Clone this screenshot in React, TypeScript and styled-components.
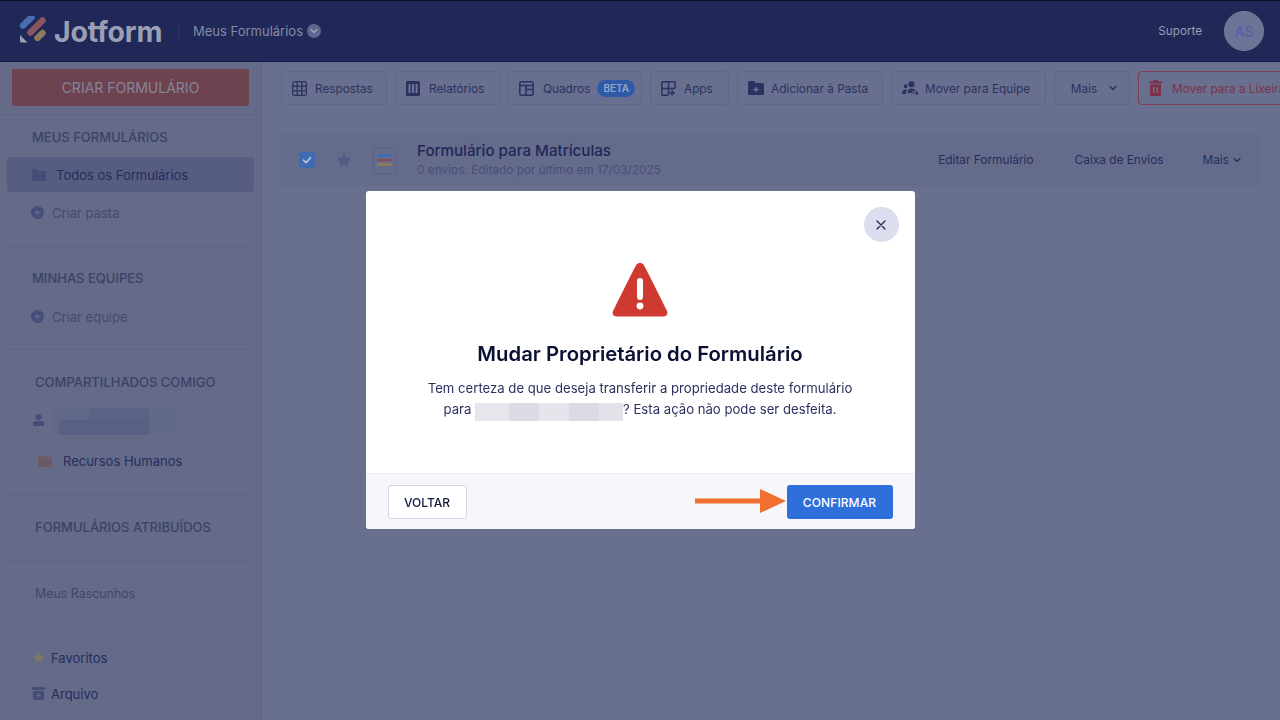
import React from "react";
import styled, { createGlobalStyle } from "styled-components";

const Global = createGlobalStyle`
  html, body { margin: 0; padding: 0; height: 100%; overflow: hidden; }
  body { font-family: Inter, "Liberation Sans", sans-serif; background: #6a7090; }
  * { box-sizing: border-box; }
`;

const Page = styled.div`
  width: 1280px;
  height: 720px;
  display: flex;
  flex-direction: column;
  overflow: hidden;
  background: #696f8f;
`;

const Header = styled.header`
  height: 62px;
  flex: none;
  display: flex;
  align-items: center;
  background: #1f2857;
  border-top: 1px solid #0b0e24;
  border-bottom: 1px solid #171e4a;
  padding: 0 16px 0 19px;
`;
const Brand = styled.div`
  display: flex;
  align-items: center;
  gap: 5px;
  width: 146px;
  flex: none;
`;
const BrandName = styled.span`
  font-size: 28.5px;
  font-weight: 700;
  letter-spacing: -0.2px;
  color: #9a9fb5;
`;
const PageName = styled.div`
  margin-left: 13px;
  padding-left: 14px;
  border-left: 1px solid #2a3363;
  height: 20px;
  display: flex;
  align-items: center;
  gap: 4px;
  font-size: 13px;
  color: #858ba8;
`;
const RoundChevron = styled.span`
  width: 14px;
  height: 14px;
  border-radius: 50%;
  background: #5e6690;
  display: flex;
  align-items: center;
  justify-content: center;
`;
const Support = styled.span`
  margin-left: auto;
  font-size: 11.7px;
  color: #989db3;
`;
const Avatar = styled.div`
  width: 40px;
  height: 40px;
  margin-left: 22px;
  border-radius: 50%;
  background: #6d7394;
  border: 1px solid #767c9c;
  color: #5d5fa8;
  font-size: 14px;
  font-weight: 600;
  display: flex;
  align-items: center;
  justify-content: center;
`;

const Body = styled.div`
  flex: 1;
  display: flex;
  min-height: 0;
`;
const Sidebar = styled.aside`
  width: 262px;
  flex: none;
  background: #646a88;
  border-right: 1px solid #5d6485;
`;
const CreateSlot = styled.div`
  height: 53px;
  padding: 7px 12px 0;
  border-bottom: 1px solid #5d6485;
`;
const CreateButton = styled.div`
  width: 237px;
  height: 37px;
  border-radius: 2px;
  background: #6d4350;
  color: #86849b;
  font-size: 14px;
  font-weight: 400;
  display: flex;
  align-items: center;
  justify-content: center;
`;
const Section = styled.section<{ $top: number; $bottom: number; $last?: boolean }>`
  margin: 0 7px;
  padding-top: ${(p) => p.$top}px;
  padding-bottom: ${(p) => p.$bottom}px;
  border-bottom: ${(p) => (p.$last ? "none" : "1px solid #5d6485")};
`;
const SectionTitle = styled.div<{ $left: number; $gap?: number }>`
  height: 20px;
  line-height: 20px;
  padding-left: ${(p) => p.$left}px;
  margin-bottom: ${(p) => p.$gap ?? 0}px;
  font-size: 13px;
  font-weight: 500;
  color: #3c4266;
`;
const NavRow = styled.div<{ $left: number; $gap: number; $active?: boolean; $muted?: boolean }>`
  height: 35px;
  display: flex;
  align-items: center;
  gap: ${(p) => p.$gap}px;
  padding-left: ${(p) => p.$left}px;
  border-radius: 4px;
  font-size: 13px;
  background: ${(p) => (p.$active ? "#565d81" : "transparent")};
  color: ${(p) => (p.$muted ? "#454b70" : "#262d5c")};
`;
const CreateRow = styled(NavRow)`
  margin-top: 3px;
`;
const SpacedRow = styled(NavRow)`
  margin-top: 1px;
`;
const MutedLine = styled.div`
  height: 20px;
  line-height: 20px;
  padding-left: 28px;
  font-size: 12.4px;
  color: #41476b;
`;
const UserRow = styled.div`
  display: flex;
  align-items: flex-start;
  gap: 7px;
  height: 28px;
  margin: 16px 0 7px;
  padding-left: 26px;
`;
const PersonSlot = styled.span`
  display: flex;
  margin-top: 6px;
`;
const SideMosaic = styled.div`
  width: 126px;
  height: 27px;
  background:
    linear-gradient(#5a6083, #5a6083) 8px 12px / 90px 15px no-repeat,
    linear-gradient(#5c6284, #5c6284) 38px 0 / 60px 12px no-repeat,
    #626887;
`;

const Main = styled.main`
  flex: 1;
  min-width: 0;
  overflow: hidden;
`;
const Toolbar = styled.div`
  height: 53px;
  display: flex;
  align-items: flex-start;
  gap: 8px;
  padding: 9px 0 0 19px;
  background: #696f8f;
  border-bottom: 1px solid #626a8e;
  overflow: hidden;
`;
const ToolButton = styled.div<{ $width: number; $gap?: number; $danger?: boolean }>`
  width: ${(p) => p.$width}px;
  flex: none;
  height: 34px;
  display: flex;
  align-items: center;
  gap: ${(p) => p.$gap ?? 9}px;
  padding-left: 10px;
  white-space: nowrap;
  border-radius: 4px;
  font-size: 11.8px;
  color: ${(p) => (p.$danger ? "#7d3149" : "#2b3260")};
  border: 1px solid ${(p) => (p.$danger ? "#7d3d55" : "#5f678d")};
`;
const ToolLabel = styled.span`
  padding-top: 1px;
`;
const MoreButton = styled(ToolButton)`
  justify-content: center;
  padding-left: 5px;
`;
const BetaTag = styled.span`
  margin-left: -2px;
  height: 17px;
  padding: 0 6px;
  border-radius: 9px;
  background: #2e5aa8;
  color: #9aa6c8;
  font-size: 10px;
  font-weight: 600;
  display: flex;
  align-items: center;
`;
const FormCard = styled.div`
  margin: 19px 19px 0;
  height: 52px;
  display: flex;
  align-items: center;
  padding: 0 19px 0 18px;
  border-radius: 4px;
  background: #656c8b;
`;
const CheckBox = styled.span`
  width: 16px;
  height: 16px;
  border-radius: 3px;
  background: #3f6bb4;
  display: flex;
  align-items: center;
  justify-content: center;
`;
const StarSlot = styled.span`
  margin-left: 21px;
  display: flex;
`;
const FormIcon = styled.div`
  margin-left: 21px;
  width: 23px;
  height: 27px;
  border-radius: 3px;
  border: 1px solid #5a6186;
  padding: 0 3px;
  display: flex;
  flex-direction: column;
  justify-content: center;
  gap: 2px;
`;
const FormStripe = styled.span<{ $color: string }>`
  height: 2.5px;
  background: ${(p) => p.$color};
`;
const FormText = styled.div`
  margin-left: 21px;
  flex: 1;
`;
const FormTitle = styled.div`
  font-size: 15.15px;
  font-weight: 500;
  line-height: 18px;
  margin-bottom: 1px;
  color: #1f2758;
`;
const FormMeta = styled.div`
  font-size: 11.85px;
  line-height: 18px;
  color: #484e78;
`;
const FormAction = styled.span<{ $space: number }>`
  margin-left: ${(p) => p.$space}px;
  margin-bottom: 1px;
  display: flex;
  align-items: center;
  gap: 3px;
  font-size: 11.85px;
  color: #262d5c;
`;

const Backdrop = styled.div`
  position: fixed;
  inset: 0;
  display: flex;
  align-items: center;
  justify-content: center;
`;
const Modal = styled.div`
  position: relative;
  width: 549px;
  height: 338px;
  background: #ffffff;
  border-radius: 3px;
  overflow: hidden;
  display: flex;
  flex-direction: column;
`;
const CloseButton = styled.div`
  position: absolute;
  top: 16px;
  right: 16px;
  width: 35px;
  height: 35px;
  border-radius: 50%;
  background: #dadeee;
  display: flex;
  align-items: center;
  justify-content: center;
`;
const ModalBody = styled.div`
  flex: 1;
  display: flex;
  flex-direction: column;
  align-items: center;
  padding-top: 71px;
`;
const ModalTitle = styled.h2`
  margin: 23px 0 0;
  font-size: 20.3px;
  line-height: 28px;
  font-weight: 600;
  color: #0a1033;
`;
const ModalText = styled.p`
  margin: 10px 0 0;
  font-size: 13.15px;
  line-height: 21px;
  text-align: center;
  color: #2b3260;
`;
const Redacted = styled.span`
  display: inline-block;
  vertical-align: -7px;
  width: 148px;
  height: 18px;
  background: linear-gradient(
    90deg,
    #e6e7ec 0 34px,
    #dcdde4 34px 64px,
    #e5e6eb 64px 94px,
    #d9dae3 94px 124px,
    #e2e3e9 124px
  );
`;
const ModalFooter = styled.div`
  height: 56px;
  flex: none;
  display: flex;
  align-items: flex-start;
  justify-content: space-between;
  padding: 11px 22px 0;
  background: #f7f7fb;
  border-top: 1px solid #eeeef3;
`;
const Back = styled.div`
  width: 79px;
  height: 34px;
  border: 1px solid #d3d6ec;
  border-radius: 3px;
  background: #fff;
  color: #0f1640;
  font-size: 12px;
  font-weight: 500;
  display: flex;
  align-items: center;
  justify-content: center;
`;
const ConfirmGroup = styled.div`
  display: flex;
  align-items: flex-start;
  gap: 1px;
`;
const ArrowSlot = styled.span`
  display: flex;
  margin-top: 3px;
`;
const Confirm = styled.div`
  width: 106px;
  height: 34px;
  border-radius: 3px;
  background: #2f6fdc;
  color: #fff;
  font-size: 12px;
  font-weight: 500;
  letter-spacing: 0.1px;
  display: flex;
  align-items: center;
  justify-content: center;
`;

const Logo = () => (
  <svg width="30" height="30" viewBox="0 0 30 30">
    <path d="M4 9.5 L12.5 1.5" stroke="#4b6cb0" strokeWidth="6.5" strokeLinecap="round" />
    <path d="M11.5 16.5 L23.5 4.5" stroke="#8a5560" strokeWidth="6.5" strokeLinecap="round" />
    <path d="M18.5 22 L23.5 17" stroke="#8d7a5c" strokeWidth="6.5" strokeLinecap="round" />
    <path d="M1 19 L8.5 26.5 H2.5 Q1 26.5 1 25 Z" fill="#9a9fb5" />
  </svg>
);
const Chevron = ({ color = "#2b3260", size = 10 }: { color?: string; size?: number }) => (
  <svg width={size} height={size} viewBox="0 0 10 10" fill="none">
    <path d="M2 3.5 L5 6.5 L8 3.5" stroke={color} strokeWidth="1.3" strokeLinecap="round" strokeLinejoin="round" />
  </svg>
);
const CheckMark = () => (
  <svg width="10" height="10" viewBox="0 0 10 10" fill="none">
    <path d="M1.5 5.2 L4 7.6 L8.5 2.6" stroke="#b9c4dc" strokeWidth="1.6" strokeLinecap="round" strokeLinejoin="round" />
  </svg>
);
const FolderIcon = ({ color = "#474d79" }: { color?: string }) => (
  <svg width="14" height="12" viewBox="0 0 14 12">
    <path d="M0 1.5 Q0 0 1.5 0 H5 L6.5 2 H12.5 Q14 2 14 3.5 V10.5 Q14 12 12.5 12 H1.5 Q0 12 0 10.5 Z" fill={color} />
  </svg>
);
const PlusCircle = () => (
  <svg width="13" height="13" viewBox="0 0 13 13">
    <circle cx="6.5" cy="6.5" r="6.5" fill="#474d79" />
    <path d="M6.5 3.5 V9.5 M3.5 6.5 H9.5" stroke="#646a88" strokeWidth="1.4" />
  </svg>
);
const PersonIcon = () => (
  <svg width="11" height="12" viewBox="0 0 11 12">
    <circle cx="5.5" cy="3" r="3" fill="#474d79" />
    <path d="M0 12 V10 Q0 7 3 7 H8 Q11 7 11 10 V12 Z" fill="#474d79" />
  </svg>
);
const StarIcon = ({ color, size = 14 }: { color: string; size?: number }) => (
  <svg width={size} height={size} viewBox="0 0 14 14">
    <path d="M7 .6 L9 4.9 L13.6 5.4 L10.2 8.5 L11.1 13.2 L7 10.8 L2.9 13.2 L3.8 8.5 L.4 5.4 L5 4.9 Z" fill={color} />
  </svg>
);
const ArchiveIcon = () => (
  <svg width="13" height="13" viewBox="0 0 13 13">
    <rect width="13" height="3" rx="1" fill="#474d79" />
    <rect x="1" y="4" width="11" height="9" rx="1" fill="#474d79" />
    <path d="M6.5 6 V10.5 M4.5 8.5 H8.5" stroke="#646a88" strokeWidth="1.2" />
  </svg>
);
const GridIcon = () => (
  <svg width="15" height="15" viewBox="0 0 15 15" fill="none" stroke="#2b3260" strokeWidth="1.3">
    <rect x=".7" y=".7" width="13.6" height="13.6" rx="1.5" />
    <path d="M5.2 .7 V14.3 M9.8 .7 V14.3 M.7 5.2 H14.3 M.7 9.8 H14.3" />
  </svg>
);
const BarsIcon = () => (
  <svg width="14" height="15" viewBox="0 0 14 15">
    <rect width="14" height="15" rx="1.5" fill="#2b3260" />
    <rect x="2.5" y="3" width="2" height="9" fill="#6f7594" />
    <rect x="6" y="3" width="2" height="9" fill="#6f7594" />
    <rect x="9.5" y="3" width="2" height="9" fill="#6f7594" />
  </svg>
);
const BoardIcon = () => (
  <svg width="15" height="15" viewBox="0 0 15 15" fill="none" stroke="#2b3260" strokeWidth="1.5">
    <rect x=".8" y=".8" width="13.4" height="13.4" rx="1.5" />
    <path d="M.8 4.6 H14.2 M7 4.6 V14.2 M7 8.6 H14.2" />
  </svg>
);
const AppsIcon = () => (
  <svg width="15" height="15" viewBox="0 0 15 15" fill="none" stroke="#2b3260" strokeWidth="1.5">
    <path d="M7 14.2 H1.8 Q.8 14.2 .8 13.2 V1.8 Q.8 .8 1.8 .8 H13.2 Q14.2 .8 14.2 1.8 V7" />
    <path d="M7.5 .8 V14.2 M.8 7.5 H14.2" />
    <path d="M11.2 9 V14.5 M8.5 11.8 H14" />
  </svg>
);
const FolderPlusIcon = () => (
  <svg width="16" height="14" viewBox="0 0 16 14">
    <path d="M0 1.5 Q0 0 1.5 0 H6 L7.5 2 H14.5 Q16 2 16 3.5 V12.5 Q16 14 14.5 14 H1.5 Q0 14 0 12.5 Z" fill="#2b3260" />
    <path d="M8 6 V11 M5.5 8.5 H10.5" stroke="#6f7594" strokeWidth="1.3" />
  </svg>
);
const TeamMoveIcon = () => (
  <svg width="17" height="15" viewBox="0 0 17 15">
    <circle cx="9.5" cy="3.2" r="3" fill="#2b3260" />
    <circle cx="3.6" cy="5.2" r="1.9" fill="#2b3260" />
    <path d="M5.5 12 Q5.5 7.5 9.5 7.5 Q13 7.5 13.5 10 H10.5 V12 Z" fill="#2b3260" />
    <path d="M0 13 Q0 8.4 3.6 8.4 Q4.6 8.4 5 8.8 Q3.8 10.4 3.8 13 Z" fill="#2b3260" />
    <path d="M10.5 12 H16 M14 10 L16 12 L14 14" fill="none" stroke="#2b3260" strokeWidth="1.1" />
  </svg>
);
const TrashIcon = () => (
  <svg width="13" height="16" viewBox="0 0 13 16">
    <rect y="1.6" width="13" height="2" rx=".6" fill="#7d3149" />
    <rect x="4" width="5" height="2" rx=".6" fill="#7d3149" />
    <path d="M1 4.5 H12 V14.5 Q12 16 10.5 16 H2.5 Q1 16 1 14.5 Z" fill="#7d3149" />
    <path d="M4.7 7 V13 M8.3 7 V13" stroke="#6f7594" strokeWidth="1.4" />
  </svg>
);
const WarningIcon = () => (
  <svg width="56" height="55" viewBox="0 0 56 55">
    <path
      d="M24.5 2.5 Q28 -1 31.5 2.5 Q33 4.5 55 49 Q56.5 53.5 52 54.5 H4 Q-0.5 53.5 1 49 Q23 4.5 24.5 2.5 Z"
      fill="#cf3a30"
    />
    <rect x="25" y="16" width="6" height="22" rx="3" fill="#fff" />
    <circle cx="28" cy="44" r="3.4" fill="#fff" />
  </svg>
);
const Arrow = () => (
  <svg width="91" height="26" viewBox="0 0 91 26">
    <path d="M0 10.5 H65 V1 L91 13 L65 25 V15.5 H0 Z" fill="#f07030" />
  </svg>
);

function App() {
  return (
    <Page>
      <Global />
      <Header>
        <Brand>
          <Logo />
          <BrandName>Jotform</BrandName>
        </Brand>
        <PageName>
          Meus Formulários
          <RoundChevron>
            <Chevron color="#a3a8bc" />
          </RoundChevron>
        </PageName>
        <Support>Suporte</Support>
        <Avatar>AS</Avatar>
      </Header>
      <Body>
        <Sidebar>
          <CreateSlot>
            <CreateButton>CRIAR FORMULÁRIO</CreateButton>
          </CreateSlot>
          <Section $top={12} $bottom={16}>
            <SectionTitle $left={25} $gap={10}>MEUS FORMULÁRIOS</SectionTitle>
            <NavRow $left={25} $gap={10} $active>
              <FolderIcon />
              Todos os Formulários
            </NavRow>
            <CreateRow $left={24} $gap={8} $muted>
              <PlusCircle />
              Criar pasta
            </CreateRow>
          </Section>
          <Section $top={21} $bottom={15}>
            <SectionTitle $left={25} $gap={11}>MINHAS EQUIPES</SectionTitle>
            <NavRow $left={24} $gap={8} $muted>
              <PlusCircle />
              Criar equipe
            </NavRow>
          </Section>
          <Section $top={22} $bottom={16}>
            <SectionTitle $left={28}>COMPARTILHADOS COMIGO</SectionTitle>
            <UserRow>
              <PersonSlot>
                <PersonIcon />
              </PersonSlot>
              <SideMosaic />
            </UserRow>
            <NavRow $left={31} $gap={11}>
              <FolderIcon color="#6e5a66" />
              Recursos Humanos
            </NavRow>
          </Section>
          <Section $top={22} $bottom={24}>
            <SectionTitle $left={28}>FORMULÁRIOS ATRIBUÍDOS</SectionTitle>
          </Section>
          <Section $top={22} $bottom={23}>
            <MutedLine>Meus Rascunhos</MutedLine>
          </Section>
          <Section $top={12} $bottom={0} $last>
            <NavRow $left={25} $gap={6}>
              <StarIcon color="#7d7565" size={13} />
              Favoritos
            </NavRow>
            <SpacedRow $left={25} $gap={6}>
              <ArchiveIcon />
              Arquivo
            </SpacedRow>
          </Section>
        </Sidebar>
        <Main>
          <Toolbar>
            <ToolButton $width={106} $gap={8}>
              <GridIcon />
              <ToolLabel>Respostas</ToolLabel>
            </ToolButton>
            <ToolButton $width={105}>
              <BarsIcon />
              <ToolLabel>Relatórios</ToolLabel>
            </ToolButton>
            <ToolButton $width={134}>
              <BoardIcon />
              <ToolLabel>Quadros</ToolLabel>
              <BetaTag>BETA</BetaTag>
            </ToolButton>
            <ToolButton $width={79} $gap={8}>
              <AppsIcon />
              <ToolLabel>Apps</ToolLabel>
            </ToolButton>
            <ToolButton $width={146} $gap={7}>
              <FolderPlusIcon />
              <ToolLabel>Adicionar à Pasta</ToolLabel>
            </ToolButton>
            <ToolButton $width={155} $gap={6}>
              <TeamMoveIcon />
              <ToolLabel>Mover para Equipe</ToolLabel>
            </ToolButton>
            <MoreButton $width={76} $gap={11}>
              <ToolLabel>Mais</ToolLabel>
              <Chevron />
            </MoreButton>
            <ToolButton $width={170} $gap={10} $danger>
              <TrashIcon />
              <ToolLabel>Mover para a Lixeira</ToolLabel>
            </ToolButton>
          </Toolbar>
          <FormCard>
            <CheckBox>
              <CheckMark />
            </CheckBox>
            <StarSlot>
              <StarIcon color="#535c85" size={16} />
            </StarSlot>
            <FormIcon>
              <FormStripe $color="#3f6bb4" />
              <FormStripe $color="#8a4a58" />
              <FormStripe $color="#8d7a5c" />
            </FormIcon>
            <FormText>
              <FormTitle>Formulário para Matrículas</FormTitle>
              <FormMeta>0 envios. Editado por último em 17/03/2025</FormMeta>
            </FormText>
            <FormAction $space={40}>Editar Formulário</FormAction>
            <FormAction $space={41}>Caixa de Envios</FormAction>
            <FormAction $space={39}>
              Mais
              <Chevron />
            </FormAction>
          </FormCard>
        </Main>
      </Body>
      <Backdrop>
        <Modal>
          <CloseButton>
            <svg width="10" height="10" viewBox="0 0 10 10">
              <path d="M1 1 L9 9 M9 1 L1 9" stroke="#1f2758" strokeWidth="1.3" strokeLinecap="round" />
            </svg>
          </CloseButton>
          <ModalBody>
            <WarningIcon />
            <ModalTitle>Mudar Proprietário do Formulário</ModalTitle>
            <ModalText>
              Tem certeza de que deseja transferir a propriedade deste formulário
              <br />
              para <Redacted />? Esta ação não pode ser desfeita.
            </ModalText>
          </ModalBody>
          <ModalFooter>
            <Back>VOLTAR</Back>
            <ConfirmGroup>
              <ArrowSlot>
                <Arrow />
              </ArrowSlot>
              <Confirm>CONFIRMAR</Confirm>
            </ConfirmGroup>
          </ModalFooter>
        </Modal>
      </Backdrop>
    </Page>
  );
}

export default App;
